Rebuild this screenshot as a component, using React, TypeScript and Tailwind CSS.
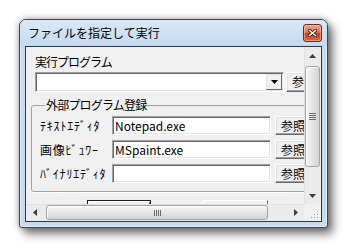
import type { ReactNode } from 'react'

/** Classic sunken edit box, the way Windows 7 draws it in this dialog. */
function TextBox({ value, className = '' }: { value?: string; className?: string }) {
  return (
    <div
      className={`flex items-center border border-t-[#a0a0a0] border-l-[#a0a0a0] border-r-white border-b-white bg-white pl-[2px] leading-[14px] shadow-[inset_1px_1px_0_#696969,inset_-1px_-1px_0_#e3e3e3] ${className}`}
    >
      {value}
    </div>
  )
}

function Btn({ children, className = '' }: { children?: ReactNode; className?: string }) {
  return (
    <div
      className={`flex shrink-0 items-center border border-t-white border-l-white border-r-[#696969] border-b-[#696969] bg-[#f0f0f0] pl-[5px] leading-[14px] shadow-[inset_-1px_-1px_0_#a0a0a0,inset_1px_1px_0_#e3e3e3] ${className}`}
    >
      {children}
    </div>
  )
}

function Arrow({ dir }: { dir: 'up' | 'down' | 'left' | 'right' }) {
  const pts = {
    up: '0,4 3.5,0 7,4',
    down: '0,0 7,0 3.5,4',
    left: '4,0 4,7 0,3.5',
    right: '0,0 4,3.5 0,7',
  }[dir]
  const vert = dir === 'up' || dir === 'down'
  return (
    <svg width={vert ? 7 : 4} height={vert ? 4 : 7} viewBox={vert ? '0 0 7 4' : '0 0 4 7'} aria-hidden>
      <polygon points={pts} fill="#3d3d3d" />
    </svg>
  )
}

function Combo() {
  return (
    <div className="flex h-[20px] w-[249px] shrink-0 justify-end border border-t-[#a0a0a0] border-l-[#a0a0a0] border-r-white border-b-white bg-white p-[1px] shadow-[inset_1px_1px_0_#696969,inset_-1px_-1px_0_#e3e3e3]">
      <div className="flex w-[16px] items-center justify-center border border-t-[#e3e3e3] border-l-[#e3e3e3] border-r-[#696969] border-b-[#696969] bg-[#f0f0f0]">
        <svg width="7" height="4" viewBox="0 0 7 4" aria-hidden>
          <polygon points="0,0 7,0 3.5,4" fill="#000" />
        </svg>
      </div>
    </div>
  )
}

const tools = [
  { label: 'ﾃｷｽﾄｴﾃﾞｨﾀ', value: 'Notepad.exe' },
  { label: '画像ﾋﾞｭﾜｰ', value: 'MSpaint.exe' },
  { label: 'ﾊﾞｲﾅﾘｴﾃﾞｨﾀ', value: '' },
]

export default function App() {
  return (
    <div className="h-[249px] w-[349px] overflow-hidden bg-white pl-[19px] pt-[19px] font-['Noto_Sans_CJK_JP',sans-serif] text-[12px] text-black">
      <div className="flex h-[209px] w-[309px] flex-col rounded-t-[7px] rounded-b-[3px] border border-[#3c4654] bg-[#c6dbf2] shadow-[0_0_7px_rgba(0,0,0,0.35),5px_6px_10px_rgba(0,0,0,0.5),inset_0_0_0_1px_rgba(255,255,255,0.55)]">
        {/* title bar */}
        <div className="flex h-[26px] shrink-0 items-start justify-between rounded-t-[6px] bg-gradient-to-b from-[#dae8f7] to-[#c4d9f0] pl-[8px] pr-[5px]">
          <span className="mt-[5px] leading-[16px]">ファイルを指定して実行</span>
          <div className="mt-[4px] flex h-[18px] w-[19px] items-center justify-center rounded-[3px] border border-[#6e2a1f] bg-[linear-gradient(to_bottom,#eea28c_0%,#e07656_45%,#c93e1f_55%,#dd6a45_100%)] shadow-[inset_0_0_0_1px_rgba(255,220,200,0.45)]">
            <svg width="9" height="8" viewBox="0 0 9 8" aria-hidden>
              <path d="M1.5 1.5l6 5M7.5 1.5l-6 5" stroke="#3a1a14" strokeWidth="3" strokeLinecap="square" />
              <path d="M1.5 1.5l6 5M7.5 1.5l-6 5" stroke="#fff" strokeWidth="1.4" strokeLinecap="square" />
            </svg>
          </div>
        </div>

        {/* client area */}
        <div className="mx-[5px] mb-[5px] grid flex-1 grid-cols-[278px_17px] grid-rows-[157px_17px] border border-[#2b3846] bg-[#f0f0f0]">
          <div className="overflow-hidden">
            <div className="w-[400px] pl-[5px] pt-[8px]">
              <div className="ml-[4px] leading-[14px] tracking-[-1px]">実行プログラム</div>
              <div className="ml-[4px] mt-[3px] flex gap-[2px]">
                <Combo />
                <Btn className="h-[20px] w-[52px]">参照</Btn>
              </div>

              <fieldset className="mt-[6px] w-[330px] rounded-[3px] border border-[#a0a0a0] pb-[8px] pl-[8px] shadow-[1px_1px_0_#fff]">
                <legend className="ml-[5px] px-[1px] leading-[14px] tracking-[-0.8px]">外部プログラム登録</legend>
                <div className="mt-[4px] flex flex-col gap-[5px]">
                  {tools.map(t => (
                    <div key={t.label} className="flex h-[19px] items-center">
                      <span className="w-[72px] shrink-0 leading-[14px] tracking-[0.8px]">{t.label}</span>
                      <TextBox value={t.value} className="h-[19px] w-[159px] shrink-0" />
                      <Btn className="ml-[4px] h-[19px] w-[50px]">参照</Btn>
                    </div>
                  ))}
                </div>
              </fieldset>

              <div className="ml-[56px] mt-[8px] flex gap-[52px]">
                <div className="h-[23px] w-[64px] border border-[#1e1e1e] bg-[#f0f0f0] shadow-[inset_1px_1px_0_#fff,inset_-1px_-1px_0_#696969]" />
                <div className="h-[23px] w-[65px] border border-t-white border-l-white border-r-[#696969] border-b-[#696969] bg-[#f0f0f0]" />
              </div>
            </div>
          </div>

          {/* vertical scrollbar */}
          <div className="flex flex-col bg-[#ebebeb] shadow-[inset_1px_0_0_#e0e0e0]">
            <div className="flex h-[17px] shrink-0 items-center justify-center">
              <Arrow dir="up" />
            </div>
            <div className="flex-1 pt-[2px]">
              <div className="mx-[1px] flex h-[101px] items-center justify-center rounded-[3px] border border-[#a3a3a3] bg-gradient-to-r from-[#f6f6f6] to-[#d4d4d4] shadow-[inset_1px_1px_0_#fff]">
                <div className="flex flex-col gap-[1px]">
                  <div className="h-px w-[7px] bg-[#6a6a6a]" />
                  <div className="h-px w-[7px] bg-[#6a6a6a]" />
                  <div className="h-px w-[7px] bg-[#6a6a6a]" />
                  <div className="h-px w-[7px] bg-[#6a6a6a]" />
                </div>
              </div>
            </div>
            <div className="flex h-[17px] shrink-0 items-center justify-center">
              <Arrow dir="down" />
            </div>
          </div>

          {/* horizontal scrollbar */}
          <div className="flex bg-[#ebebeb] shadow-[inset_0_1px_0_#e0e0e0]">
            <div className="flex w-[17px] shrink-0 items-center justify-center">
              <Arrow dir="left" />
            </div>
            <div className="flex-1 py-[1px] pl-[3px]">
              <div className="flex h-full w-[222px] items-center justify-center rounded-[3px] border border-[#a3a3a3] bg-gradient-to-b from-[#f6f6f6] to-[#d4d4d4] shadow-[inset_1px_1px_0_#fff]">
                <div className="flex gap-[1px]">
                  <div className="h-[6px] w-px bg-[#6a6a6a]" />
                  <div className="h-[6px] w-px bg-[#6a6a6a]" />
                  <div className="h-[6px] w-px bg-[#6a6a6a]" />
                  <div className="h-[6px] w-px bg-[#6a6a6a]" />
                </div>
              </div>
            </div>
            <div className="flex w-[17px] shrink-0 items-center justify-center">
              <Arrow dir="right" />
            </div>
          </div>

          {/* size grip */}
          <div className="flex items-end justify-end bg-[#f0f0f0] p-[2px]">
            <svg width="10" height="10" viewBox="0 0 10 10" aria-hidden>
              {[
                [8, 2],
                [8, 5],
                [5, 5],
                [8, 8],
                [5, 8],
                [2, 8],
              ].map(([x, y]) => (
                <g key={`${x}-${y}`}>
                  <rect x={x} y={y} width="1" height="1" fill="#9a9a9a" />
                  <rect x={x + 1} y={y + 1} width="1" height="1" fill="#fff" />
                </g>
              ))}
            </svg>
          </div>
        </div>
      </div>
    </div>
  )
}
